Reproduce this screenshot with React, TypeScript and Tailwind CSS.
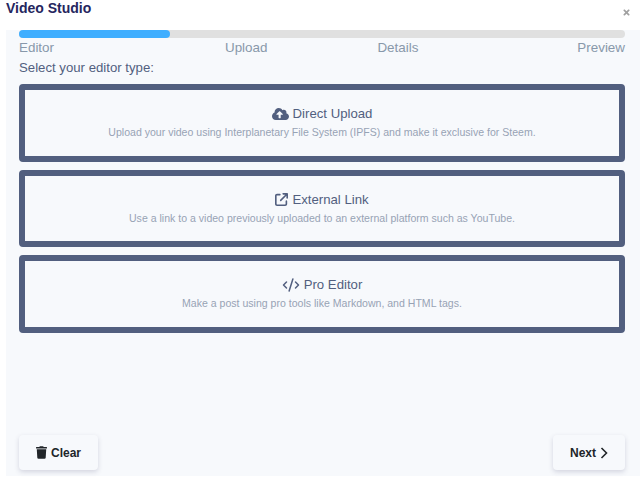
import { FaCloudUploadAlt, FaTrash, FaTimes } from "react-icons/fa";
import { FaArrowUpRightFromSquare } from "react-icons/fa6";
import { CodeXml } from "lucide-react";
import type { ReactNode } from "react";

function Option({ icon, title, text }: { icon: ReactNode; title: string; text: string }) {
  return (
    <div className="h-[77.5px] rounded-[4px] border-[6px] border-[#525f7f] flex flex-col items-center">
      <div className="mt-[15px] h-[18px] flex items-center gap-[4px] text-[13.2px] leading-[18px] text-[#525f7f]">
        {icon}
        <span>{title}</span>
      </div>
      <div className="mt-[2px] text-[10.55px] leading-[14px] text-[#97a3b5]">{text}</div>
    </div>
  );
}

export default function App() {
  return (
    <div className="w-[640px] h-[481px] bg-white font-['Liberation_Sans',sans-serif] flex flex-col overflow-hidden">
      <div className="h-[30px] flex justify-between items-start pl-[6px] pr-[9px]">
        <div className="text-[14px] leading-[16px] font-bold text-[#25265e]">Video Studio</div>
        <FaTimes className="mt-[7.5px] w-[9px] h-[9px] text-[#a0a0a0]" />
      </div>
      <div className="ml-[6px] h-[446px] bg-[#f7f9fc] pl-[13px] pr-[15px] flex flex-col">
        <div className="h-[8px] rounded-full bg-[#e0e0e0]">
          <div className="h-full w-[151px] rounded-full bg-[#3faeff]" />
        </div>
        <div className="mt-[2px] flex text-[13.4px] leading-[16px] text-[#8898aa]">
          <span>Editor</span>
          <span className="ml-[171px]">Upload</span>
          <span className="ml-[110px]">Details</span>
          <span className="ml-auto">Preview</span>
        </div>
        <div className="mt-[4px] text-[13.2px] leading-[16px] text-[#525f7f]">Select your editor type:</div>
        <div className="mt-[8px] flex flex-col gap-[8px]">
          <Option
            icon={<FaCloudUploadAlt className="w-[17px] h-[14px]" />}
            title="Direct Upload"
            text="Upload your video using Interplanetary File System (IPFS) and make it exclusive for Steem."
          />
          <Option
            icon={<FaArrowUpRightFromSquare className="w-[13px] h-[13px]" />}
            title="External Link"
            text="Use a link to a video previously uploaded to an external platform such as YouTube."
          />
          <Option
            icon={<CodeXml className="w-[18px] h-[18px]" strokeWidth={2} />}
            title="Pro Editor"
            text="Make a post using pro tools like Markdown, and HTML tags."
          />
        </div>
        <div className="mt-auto mb-[6px] flex justify-between">
          <button className="w-[79px] h-[35px] rounded-[4px] bg-[#f7f9fc] shadow-[0_2px_5px_rgba(50,50,93,0.18)] flex items-center justify-center gap-[4px] text-[12px] font-bold text-[#212529]">
            <FaTrash className="w-[11px] h-[13px]" />
            <span>Clear</span>
          </button>
          <button className="w-[72px] h-[35px] rounded-[4px] bg-[#f7f9fc] shadow-[0_2px_5px_rgba(50,50,93,0.18)] flex items-center justify-center gap-[4px] text-[12px] font-bold text-[#212529]">
            <span>Next</span>
            <svg width="8" height="12" viewBox="0 0 8 12" fill="none" stroke="currentColor" strokeWidth="1.6">
              <path d="M1.5 1l5 5-5 5" />
            </svg>
          </button>
        </div>
      </div>
    </div>
  );
}
